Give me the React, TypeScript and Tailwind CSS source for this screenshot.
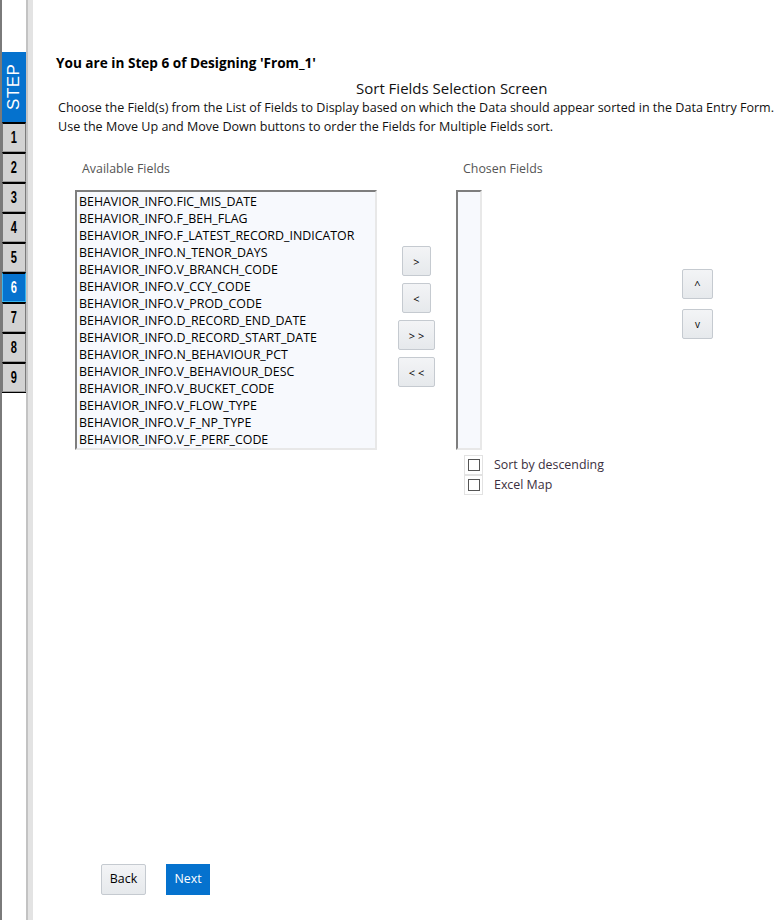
import React from 'react';

const fields = [
  'BEHAVIOR_INFO.FIC_MIS_DATE',
  'BEHAVIOR_INFO.F_BEH_FLAG',
  'BEHAVIOR_INFO.F_LATEST_RECORD_INDICATOR',
  'BEHAVIOR_INFO.N_TENOR_DAYS',
  'BEHAVIOR_INFO.V_BRANCH_CODE',
  'BEHAVIOR_INFO.V_CCY_CODE',
  'BEHAVIOR_INFO.V_PROD_CODE',
  'BEHAVIOR_INFO.D_RECORD_END_DATE',
  'BEHAVIOR_INFO.D_RECORD_START_DATE',
  'BEHAVIOR_INFO.N_BEHAVIOUR_PCT',
  'BEHAVIOR_INFO.V_BEHAVIOUR_DESC',
  'BEHAVIOR_INFO.V_BUCKET_CODE',
  'BEHAVIOR_INFO.V_FLOW_TYPE',
  'BEHAVIOR_INFO.V_F_NP_TYPE',
  'BEHAVIOR_INFO.V_F_PERF_CODE',
];

const steps = [1, 2, 3, 4, 5, 6, 7, 8, 9];

function SmallButton({ label, wide }: { label: string; wide?: boolean }) {
  return (
    <button
      className={`${wide ? 'w-[37px]' : 'w-[29px]'} h-[30px] rounded-[2px] border border-[#c5cad0] bg-gradient-to-b from-[#f3f4f6] to-[#e6e9ec] text-[11px] text-black leading-none`}
    >
      {label}
    </button>
  );
}

export default function App() {
  return (
    <div className="flex min-h-[920px] w-[777px] bg-white font-['Open_Sans',sans-serif] text-black">
      {/* step rail */}
      <div className="flex w-[33px] shrink-0">
        <div className="w-[2px] bg-[#7a7a7a]" />
        <div className="flex w-[24px] flex-col pt-[52px]">
          <div className="flex h-[70px] items-center justify-center bg-[#0572ce]">
            <span className="-rotate-90 font-['Liberation_Sans',sans-serif] text-[17px] tracking-[0.5px] text-white">STEP</span>
          </div>
          {steps.map((s) => (
            <div
              key={s}
              className={`flex h-[30px] items-center justify-center border-t-[2px] border-t-black ${
                s === 6
                  ? 'border-x border-b border-x-[#38b5ef] border-b-[#38b5ef] bg-[#0572ce] text-white'
                  : 'border-x border-b border-x-[#7a7a7a] border-b-[#9a9a9a] bg-[#d2d2d2] text-black'
              }`}
            >
              <span className="inline-block scale-x-[0.65] font-['Liberation_Sans',sans-serif] text-[17px] font-bold">{s}</span>
            </div>
          ))}
          <div className="h-px bg-black" />
        </div>
        <div className="w-[2px] bg-[#c3c3c3]" />
        <div className="w-[5px] bg-[#e3e3e3]" />
      </div>

      {/* main */}
      <div className="flex flex-1 flex-col pl-[23px] pt-[55px]">
        <div className="text-[13.6px] font-bold leading-[16px] whitespace-nowrap">You are in Step 6 of Designing 'From_1'</div>
        <div className="mt-[7px] pl-[300px] text-[15px] leading-[20px] text-[#111] whitespace-nowrap">Sort Fields Selection Screen</div>
        <div className="pl-[2px] text-[12.55px] leading-[19px] text-[#111] whitespace-nowrap">
          <div>Choose the Field(s) from the List of Fields to Display based on which the Data should appear sorted in the Data Entry Form.</div>
          <div>Use the Move Up and Move Down buttons to order the Fields for Multiple Fields sort.</div>
        </div>

        <div className="mt-[25px] flex">
          {/* available */}
          <div className="flex shrink-0 flex-col pl-[19px]">
            <div className="pl-[7px] text-[12.4px] leading-[16px] text-[#555]">Available Fields</div>
            <div className="mt-[13px] h-[260px] w-[302px] border-[2px] border-t-[#7e7e7e] border-l-[#7e7e7e] border-r-[#e8e8e8] border-b-[#e8e8e8] bg-[#f7f9fd] pl-[2px] pt-[1px]">
              {fields.map((f) => (
                <div key={f} className="text-[12.4px] leading-[17px] text-black whitespace-nowrap">
                  {f}
                </div>
              ))}
            </div>
          </div>

          {/* move buttons */}
          <div className="flex w-[79px] shrink-0 flex-col items-center gap-[7px] pt-[85px]">
            <SmallButton label=">" />
            <SmallButton label="<" />
            <SmallButton label="> >" wide />
            <SmallButton label="< <" wide />
          </div>

          {/* chosen */}
          <div className="flex w-[226px] shrink-0 flex-col">
            <div className="pl-[7px] text-[12.4px] leading-[16px] text-[#555]">Chosen Fields</div>
            <div className="mt-[13px] h-[260px] w-[26px] border-[2px] border-t-[#7e7e7e] border-l-[#7e7e7e] border-r-[#e8e8e8] border-b-[#e8e8e8] bg-[#f7f9fd]" />
            <div className="mt-[5px] flex flex-col pl-[8px]">
              {['Sort by descending', 'Excel Map'].map((l) => (
                <div key={l} className="flex h-[20px] items-center">
                  <div className="flex h-[20px] w-[19px] items-center justify-center border border-[#e2e2e2]">
                    <div className="h-[12px] w-[12px] border border-[#555] bg-white" />
                  </div>
                  <span className="ml-[11px] text-[12.4px] text-[#3b3040] whitespace-nowrap">{l}</span>
                </div>
              ))}
            </div>
          </div>

          {/* up/down */}
          <div className="flex shrink-0 flex-col gap-[10px] pt-[108px]">
            <button className="h-[30px] w-[31px] rounded-[2px] border border-[#c5cad0] bg-gradient-to-b from-[#f3f4f6] to-[#e6e9ec] text-[11px] leading-none">^</button>
            <button className="h-[30px] w-[31px] rounded-[2px] border border-[#c5cad0] bg-gradient-to-b from-[#f3f4f6] to-[#e6e9ec] text-[10px] leading-none">v</button>
          </div>
        </div>

        <div className="mt-auto mb-[25px] flex gap-[20px] pl-[45px]">
          <button className="h-[31px] w-[45px] rounded-[2px] border border-[#c5cad0] bg-gradient-to-b from-[#f3f4f6] to-[#e6e9ec] text-[12.4px] text-black">Back</button>
          <button className="h-[31px] w-[44px] bg-[#0572ce] text-[12.4px] text-white">Next</button>
        </div>
      </div>
    </div>
  );
}
